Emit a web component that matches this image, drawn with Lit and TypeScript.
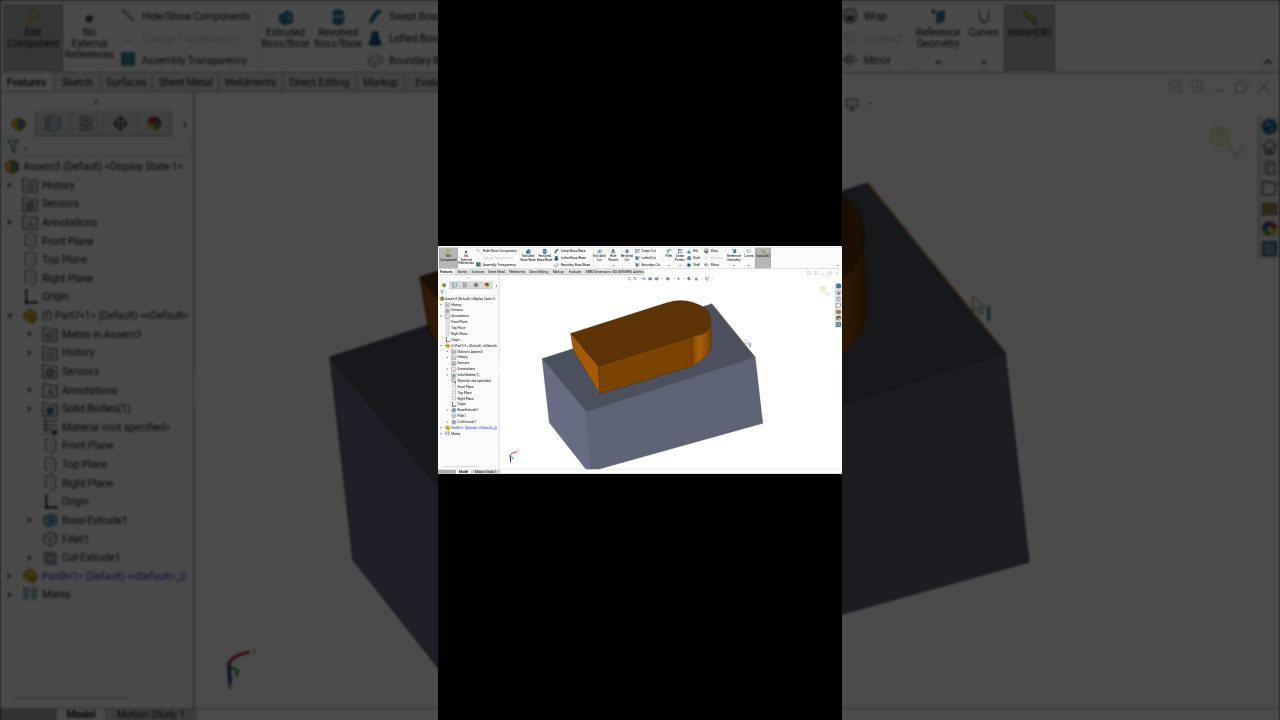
import { LitElement, html, css, svg } from "lit";
import { customElement } from "lit/decorators.js";

const B = "#2f7fa6", D = "#17526f", L = "#9fd0e4", Y = "#e3b520";

const ICONS: Record<string, any> = {
  edit: svg`<circle cx="11" cy="7" r="5" fill="none" stroke="#7c9a2a" stroke-width="2"/><path d="M8 11 L3 18" stroke="#c9a21d" stroke-width="3"/><path d="M13 3 l4 3" stroke="#d8c22a" stroke-width="2"/>`,
  noref: svg`<circle cx="9" cy="12" r="3.4" fill="#333" stroke="#111"/><circle cx="9" cy="12" r="1.2" fill="#ccc"/><path d="M12 6 h4 v5" fill="none" stroke="#ddd"/>`,
  hide: svg`<path d="M4 3 L16 15" stroke="#777" stroke-width="2.4"/><path d="M10 3 l5 5" stroke="#bbb"/><path d="M3 5 l3 -2" stroke="#444"/>`,
  transp: svg`<rect x="8" y="11" width="4" height="4" fill="#ccc"/>`,
  asmt: svg`<rect x="3" y="2" width="14" height="14" fill="#2f7f95" stroke="#1b5468"/><path d="M6 5 h8 M6 8 h8 M6 11 h8" stroke="#9fd0e4" stroke-dasharray="1 1"/><rect x="3" y="16" width="14" height="2" fill="#ddd"/>`,
  extrude: svg`<path d="M3 8 l9 -5 l5 3 v10 l-9 3 l-5 -4z" fill="${B}" stroke="${D}"/><path d="M12 3 v11 l5 2" fill="${L}" stroke="${D}"/><path d="M3 8 l5 3 v8" fill="none" stroke="${D}"/>`,
  revolve: svg`<ellipse cx="10" cy="6" rx="6" ry="4" fill="${B}" stroke="${D}"/><ellipse cx="11" cy="11" rx="6" ry="4" fill="${L}" stroke="${D}"/><ellipse cx="10" cy="15" rx="6" ry="3.6" fill="${B}" stroke="${D}"/>`,
  swept: svg`<path d="M4 16 C8 16 8 11 10 9 C12 6 14 6 16 4" fill="none" stroke="${D}" stroke-width="5"/><path d="M4 16 C8 16 8 11 10 9 C12 6 14 6 16 4" fill="none" stroke="${B}" stroke-width="3"/>`,
  lofted: svg`<path d="M7 3 h6 l1 7 l3 7 q-7 3 -14 0 l3 -7z" fill="${D}" stroke="#0f3c54"/><path d="M9 4 v13" stroke="${B}" stroke-width="2"/>`,
  boundary: svg`<path d="M3 9 l9 -5 l6 3 v6 l-9 5 l-6 -3z" fill="#eee" stroke="#666"/><path d="M3 9 l6 4 l9 -6 M9 13 v5" fill="none" stroke="#666"/>`,
  extcut: svg`<path d="M4 6 l7 -3 l5 3 v9 l-7 3 l-5 -3z" fill="#cfe3ec" stroke="${D}"/><rect x="8" y="7" width="5" height="6" fill="${B}"/>`,
  hole: svg`<circle cx="10" cy="6" r="3.5" fill="${B}" stroke="${D}"/><rect x="4" y="11" width="5" height="5" fill="#b5cbd6" stroke="${D}"/><rect x="11" y="11" width="5" height="5" fill="#b5cbd6" stroke="${D}"/>`,
  revcut: svg`<ellipse cx="10" cy="10" rx="7" ry="7" fill="#cfe3ec" stroke="${D}"/><circle cx="10" cy="10" r="3.5" fill="${D}"/>`,
  sweptcut: svg`<rect x="3" y="4" width="14" height="12" fill="#dfeaf0" stroke="${D}"/><path d="M5 14 C8 14 9 6 15 6" fill="none" stroke="${B}" stroke-width="3"/>`,
  loftcut: svg`<rect x="3" y="4" width="14" height="12" fill="#dfeaf0" stroke="${D}"/><path d="M8 6 h4 l2 8 h-8z" fill="${D}"/>`,
  boundcut: svg`<rect x="3" y="4" width="14" height="12" fill="#eee" stroke="#666"/><path d="M6 6 h8 v8 h-8z" fill="${B}"/>`,
  fillet: svg`<path d="M3 16 V7 Q3 3 8 3 h9 v5 h-6 q-3 0 -3 3 v5z" fill="${L}" stroke="${D}"/><path d="M3 7 l5 4" stroke="${D}"/>`,
  linear: svg`<rect x="3" y="3" width="5" height="5" fill="${B}" stroke="${D}"/><rect x="12" y="3" width="5" height="5" fill="#cfe3ec" stroke="${D}"/><rect x="3" y="12" width="5" height="5" fill="#cfe3ec" stroke="${D}"/><rect x="12" y="12" width="5" height="5" fill="#cfe3ec" stroke="${D}"/>`,
  rib: svg`<path d="M3 15 l9 -3 l5 2 l-8 4z" fill="${B}" stroke="${D}"/><path d="M7 14 V6 l5 6" fill="${L}" stroke="${D}"/>`,
  draft: svg`<path d="M4 16 l3 -11 h8 l2 11z" fill="${B}" stroke="${D}"/><path d="M7 5 l2 11" stroke="${L}"/>`,
  shell: svg`<path d="M3 7 l7 -3 l7 3 v8 l-7 3 l-7 -3z" fill="${L}" stroke="${D}"/><path d="M6 8 l4 -2 l4 2 v5 l-4 2 l-4 -2z" fill="${D}"/>`,
  wrap: svg`<ellipse cx="10" cy="5" rx="7" ry="3" fill="#bbb" stroke="#333"/><path d="M3 5 v10 q7 5 14 0 V5" fill="#ccc" stroke="#333"/><path d="M6 10 h8 v5 h-8z" fill="#345"/>`,
  intersect: svg`<circle cx="10" cy="9" r="6" fill="#eee" stroke="#c4c4c4"/><path d="M5 17 h10" stroke="#c4c4c4"/>`,
  mirror: svg`<path d="M10 1 V19" stroke="#333" stroke-dasharray="2 1"/><path d="M8 5 L2 9 L8 14z" fill="#9db8c6" stroke="#333"/><path d="M12 5 L18 9 L12 14z" fill="#fff" stroke="#333"/>`,
  refgeom: svg`<circle cx="5" cy="4" r="2.4" fill="${D}"/><path d="M9 5 l8 -2 v11 l-8 3z" fill="${B}" stroke="${D}"/><path d="M9 9 v10" stroke="${D}"/>`,
  curves: svg`<path d="M5 2 C4 9 6 16 10 16 C14 16 16 9 15 2" fill="none" stroke="#555" stroke-width="1.4"/><path d="M5 2 C4 9 6 14 10 14" fill="none" stroke="${B}"/>`,
  instant: svg`<path d="M5 3 L17 12 L14 16 L3 7z" fill="#e6d23a" stroke="#333"/><path d="M7 9 L14 15" stroke="#2f7f95" stroke-width="2"/><path d="M14 16 l3 2" stroke="#333" stroke-width="2"/>`,
  history: svg`<path d="M2 3 h5 l2 2 h9 v13 H2z" fill="#e6e8ea" stroke="#333"/><circle cx="10" cy="12" r="3.5" fill="none" stroke="#555"/><path d="M10 10 v2 h2" stroke="#555" fill="none"/>`,
  sensors: svg`<path d="M2 3 h5 l2 2 h9 v13 H2z" fill="#e6e8ea" stroke="#333"/><circle cx="10" cy="12" r="3.6" fill="none" stroke="#222" stroke-width="1.4"/><circle cx="10" cy="12" r="1" fill="#222"/>`,
  annot: svg`<path d="M2 3 h5 l2 2 h9 v13 H2z" fill="#e6e8ea" stroke="#333"/><text x="10" y="16" font-size="10" font-family="Liberation Serif" text-anchor="middle" fill="#222">A</text>`,
  mates: svg`<path d="M2 3 h5 l2 2 h9 v13 H2z" fill="#e6e8ea" stroke="#333"/><circle cx="8" cy="12" r="3" fill="#9fb8c6" stroke="#555"/><circle cx="12" cy="12" r="3" fill="#cfe0e8" stroke="#555"/>`,
  bodies: svg`<path d="M2 3 h5 l2 2 h9 v13 H2z" fill="#e6e8ea" stroke="#333"/><circle cx="10" cy="12" r="3.6" fill="${B}" stroke="${D}"/>`,
  plane: svg`<path d="M10 1 L16 3 V16 L10 19" fill="none" stroke="#444"/><path d="M9 2 H5 V15 H8" fill="none" stroke="#444"/><path d="M11 5 V15" stroke="#444" stroke-dasharray="2 2"/>`,
  origin: svg`<path d="M6 2 V16 H18" fill="none" stroke="#111" stroke-width="1.8"/><circle cx="6" cy="16" r="1.8" fill="#111"/><path d="M4 4 L6 1 L8 4 M16 14 L19 16 L16 18" fill="#111"/>`,
  part: svg`<path d="M3 8 L9 2 L16 6 L18 12 L14 18 L7 15 L3 11z" fill="${Y}" stroke="#7a5c0a"/><path d="M3 8 L11 11 L18 12 M11 11 L14 18" fill="none" stroke="#8a6a10"/>`,
  assem: svg`<path d="M2 7 L9 2 L17 5 L18 13 L11 18 L4 14z" fill="${Y}" stroke="#6c5410"/><path d="M10 4 L16 7 V13 L10 15z" fill="#4a8fb0" stroke="${D}"/>`,
  material: svg`<path d="M2 3 H18 M2 8 H18 M2 13 H12 M5 1 V15" stroke="#333" stroke-width="1.2"/><path d="M2 18 H10" stroke="#7a8a20"/><circle cx="15" cy="16" r="3" fill="#222"/><circle cx="15" cy="16" r="1" fill="#eee"/>`,
  boss: svg`<path d="M3 7 l8 -4 l6 3 v9 l-8 3 l-6 -3z" fill="${L}" stroke="${D}"/><path d="M9 7 l8 -1 M9 7 v11 M3 7 l6 0" stroke="${D}" fill="none"/><rect x="10" y="9" width="4" height="5" fill="${B}"/>`,
  filleti: svg`<path d="M3 6 l8 -4 l6 3 v9 l-7 4 l-7 -4z" fill="#e8eef1" stroke="#445"/><path d="M3 6 l7 4 l7 -5 M10 10 v8" fill="none" stroke="#445"/>`,
  cut: svg`<path d="M4 4 H15 L17 6 V17 H6 L4 15z" fill="#b7c2c8" stroke="#445"/><rect x="8" y="7" width="5" height="7" fill="#e8eef1" stroke="#445"/>`,
  matesf: svg`<path d="M3 2 h5 l0 10 q-3 8 -5 0z" fill="#9fc4d0" stroke="#5a8a9a"/><path d="M12 2 h5 v10 q-2 8 -5 0z" fill="#9fc4d0" stroke="#5a8a9a"/>`,
  fm: svg`<path d="M2 7 L9 2 L17 5 L18 13 L11 18 L4 14z" fill="${Y}" stroke="#6c5410"/><path d="M10 4 L16 7 V13 L10 15z" fill="#4a8fb0" stroke="${D}"/>`,
  pm: svg`<rect x="2" y="2" width="16" height="16" fill="#e6eef2" stroke="#2f5f75"/><path d="M2 6 H18 M2 10 H18 M2 14 H18 M6 2 V18" stroke="#2f5f75"/>`,
  config: svg`<rect x="3" y="2" width="6" height="6" fill="none" stroke="#333"/><rect x="3" y="12" width="6" height="6" fill="none" stroke="#333"/><circle cx="14" cy="7" r="3" fill="none" stroke="#333"/><circle cx="13" cy="15" r="3" fill="none" stroke="#333"/>`,
  dim: svg`<circle cx="10" cy="10" r="6" fill="none" stroke="#111" stroke-width="1.6"/><path d="M10 1 V19 M1 10 H19" stroke="#111" stroke-width="1.4"/>`,
  color: svg`<circle cx="10" cy="10" r="8" fill="#d9b51c"/><path d="M10 10 L2 10 A8 8 0 0 1 16 4.5z" fill="#b32a26"/><path d="M10 10 L16 4.5 A8 8 0 0 1 18 10z" fill="#2a57a8"/><path d="M10 10 L18 10 A8 8 0 0 1 10 18z" fill="#3d8f3a"/>`,
  funnel: svg`<path d="M1 2 H15 L10 9 V18 L6 14 V9z" fill="#e8f0f2" stroke="#1d6a74" stroke-width="1.6"/>`,
  globe: svg`<circle cx="10" cy="10" r="8.4" fill="#1a6a96" stroke="#0b3c58"/><path d="M5 7 q4 -3 7 0 q-3 4 -7 0z M10 13 q3 -2 5 0 l-3 3z" fill="#8fc8e0"/>`,
  home: svg`<path d="M10 2 L18 10 H15 V18 H5 V10 H2z" fill="#e8eef1" stroke="#333" stroke-width="1.2"/><rect x="8" y="12" width="4" height="6" fill="#7aa0b4" stroke="#333"/>`,
  pcube: svg`<path d="M5 4 L13 2 L16 5 V17 L8 18 L5 15z" fill="#ddd" stroke="#444"/><path d="M5 4 L8 7 V18 M8 7 L16 5" fill="none" stroke="#444"/>`,
  open: svg`<path d="M2 3 h6 l2 2 h8 l-3 13 H2z" fill="#f1f1f1" stroke="#333" stroke-width="1.2"/>`,
  pal: svg`<rect x="2" y="4" width="16" height="13" fill="#b79c4a" stroke="#444"/><path d="M5 7 l3 3 l3 -3 l3 3 M5 14 l3 -3 l3 3 l3 -3" stroke="#222" fill="none"/>`,
  wheel: svg`<circle cx="10" cy="10" r="8.5" fill="#3d9a3a"/><path d="M10 10 L1.5 10 A8.5 8.5 0 0 1 10 1.5z" fill="#2a57a8"/><path d="M10 10 L10 1.5 A8.5 8.5 0 0 1 18.5 10z" fill="#c22a26"/><path d="M10 10 L18.5 10 A8.5 8.5 0 0 1 10 18.5z" fill="#e0c020"/><circle cx="10" cy="10" r="2.2" fill="#eee"/>`,
  list: svg`<rect x="2" y="2" width="16" height="16" fill="#3f7f9a" stroke="#1f4a5c"/><path d="M5 6 H15 M5 10 H15 M5 14 H15" stroke="#e5f0f4" stroke-width="1.3"/>`,
  zoomfit: svg`<circle cx="8" cy="8" r="5" fill="#fff" stroke="#333" stroke-width="1.4"/><path d="M12 12 L18 18" stroke="#333" stroke-width="2"/>`,
  zoomarea: svg`<circle cx="8" cy="8" r="5" fill="#cfe3ec" stroke="#333" stroke-width="1.4"/><path d="M12 12 L18 18" stroke="#2f7f95" stroke-width="2"/>`,
  prev: svg`<path d="M3 10 L10 3 L10 7 H17 V13 H10 V17z" fill="#bcd" stroke="#345"/>`,
  section: svg`<path d="M3 6 L12 3 L17 6 V14 L8 17 L3 14z" fill="#4d93b5" stroke="#1b5a7a"/><path d="M8 8 V17" stroke="#fff"/>`,
  style: svg`<path d="M3 6 L11 3 L17 6 V14 L9 17 L3 14z" fill="#5a9fbe" stroke="#1b5a7a"/><circle cx="10" cy="9" r="3" fill="#e3b520"/>`,
  cross: svg`<circle cx="10" cy="10" r="3.4" fill="#2f7f95"/><path d="M10 3 V17 M3 10 H17" stroke="#333"/>`,
  scene: svg`<circle cx="10" cy="10" r="7" fill="#d9b51c"/><path d="M10 10 L3 10 A7 7 0 0 1 14 4z" fill="#b32a26"/><path d="M10 10 L17 10 A7 7 0 0 1 10 17z" fill="#3d8f3a"/>`,
  scene2: svg`<path d="M3 16 L10 3 L17 16z" fill="#7aa0b4" stroke="#345"/><circle cx="14" cy="6" r="3" fill="#e3b520"/>`,
  monitor: svg`<rect x="2" y="3" width="16" height="11" fill="#f2f2f2" stroke="#444" stroke-width="1.3"/><path d="M10 14 V17 M6 18 H14" stroke="#444" stroke-width="1.5"/>`,
  winl: svg`<rect x="4" y="4" width="12" height="12" fill="none" stroke="#999"/><path d="M11 7.5 L8 10 L11 12.5z" fill="#777"/>`,
  winr: svg`<rect x="4" y="4" width="12" height="12" fill="none" stroke="#999"/><path d="M9 7.5 L12 10 L9 12.5z" fill="#777"/>`,
  min: svg`<path d="M4 15 H16" stroke="#888" stroke-width="1.3"/>`,
  restore: svg`<rect x="3" y="7" width="10" height="10" fill="none" stroke="#999"/><path d="M7 7 V3 H17 V13 H13" fill="none" stroke="#999"/>`,
  close: svg`<path d="M4 4 L16 16 M16 4 L4 16" stroke="#999" stroke-width="1.2"/>`,
};

const ic = (n: string) => html`<svg class="ic" viewBox="0 0 20 20">${ICONS[n]}</svg>`;

type Btn = { kind: "btn"; w: number; icon: string; text: string; on?: boolean; drop?: boolean };
type Lst = { kind: "list"; w: number; pad: number; rows: [string, string, boolean?][] };
type Sep = { kind: "sep" };
const btn = (w: number, icon: string, text: string, o: Partial<Btn> = {}): Btn => ({ kind: "btn", w, icon, text, ...o });
const lst = (w: number, pad: number, rows: [string, string, boolean?][]): Lst => ({ kind: "list", w, pad, rows });
const sep: Sep = { kind: "sep" };

const RIBBON: (Btn | Lst | Sep)[] = [
  btn(60, "edit", "Edit\nComponent", { on: true }),
  btn(53, "noref", "No\nExternal\nReferences"),
  lst(142, 2, [["hide", "Hide/Show Components"], ["transp", "Change Transparency", true], ["asmt", "Assembly Transparency"]]),
  sep,
  btn(53, "extrude", "Extruded\nBoss/Base"),
  btn(52, "revolve", "Revolved\nBoss/Base"),
  lst(124, 1, [["swept", "Swept Boss/Base"], ["lofted", "Lofted Boss/Base"], ["boundary", "Boundary Boss/Base"]]),
  sep,
  btn(45, "extcut", "Extruded\nCut"),
  btn(42, "hole", "Hole\nWizard", { drop: true }),
  btn(45, "revcut", "Revolved\nCut"),
  lst(91, 0, [["sweptcut", "Swept Cut"], ["loftcut", "Lofted Cut"], ["boundcut", "Boundary Cut"]]),
  sep,
  btn(37, "fillet", "Fillet", { drop: true }),
  btn(34, "linear", "Linear\nPattern", { drop: true }),
  lst(55, 1, [["rib", "Rib"], ["draft", "Draft"], ["shell", "Shell"]]),
  lst(72, 1, [["wrap", "Wrap"], ["intersect", "Intersect", true], ["mirror", "Mirror"]]),
  sep,
  btn(52, "refgeom", "Reference\nGeometry", { drop: true }),
  btn(40, "curves", "Curves", { drop: true }),
  btn(51, "instant", "Instant3D", { on: true }),
];

const TABS: [string, number][] = [
  ["Features", 54], ["Sketch", 47], ["Surfaces", 52], ["Sheet Metal", 66], ["Weldments", 64], ["Direct Editing", 74],
  ["Markup", 48], ["Evaluate", 60], ["MBD Dimensions", 88], ["SOLIDWORKS Add-Ins", 99],
];

type Row = [number, "" | "r" | "d", string, string, boolean?];
const TREE: Row[] = [
  [0, "r", "history", "History"], [0, "", "sensors", "Sensors"], [0, "r", "annot", "Annotations"],
  [0, "", "plane", "Front Plane"], [0, "", "plane", "Top Plane"], [0, "", "plane", "Right Plane"], [0, "", "origin", "Origin"],
  [0, "d", "part", "(f) Part7<1> (Default) <<Default>"],
  [1, "r", "mates", "Mates in Assem3"], [1, "r", "history", "History"], [1, "", "sensors", "Sensors"], [1, "r", "annot", "Annotations"],
  [1, "r", "bodies", "Solid Bodies(1)"], [1, "", "material", "Material <not specified>"],
  [1, "", "plane", "Front Plane"], [1, "", "plane", "Top Plane"], [1, "", "plane", "Right Plane"], [1, "", "origin", "Origin"],
  [1, "r", "boss", "Boss-Extrude1"], [1, "", "filleti", "Fillet1"], [1, "r", "cut", "Cut-Extrude1"],
  [0, "r", "part", "Part8<1> (Default) <<Default>_D", true], [0, "r", "matesf", "Mates"],
];

const HUD: [string, number][] = [
  ["zoomfit", 607], ["zoomarea", 625], ["prev", 652], ["section", 672], ["style", 693], ["section", 728], ["cross", 762], ["scene", 795], ["scene2", 818], ["monitor", 852],
];

@customElement("sw-ui")
class SwUi extends LitElement {
  static styles = css`
    :host { display: flex; flex-direction: column; width: 1280px; height: 722px; background: #fff; overflow: hidden;
      font-family: Roboto, "Liberation Sans", sans-serif; font-size: 10.3px; letter-spacing: -0.2px; color: #111; }
    .ic { display: block; width: 100%; height: 100%; overflow: visible; }
    .ribbon { display: flex; height: 69px; margin-top: 3px; flex: none; padding: 1px 0 0 3px; box-sizing: border-box; background: #fbfbfb; border-top: 1px solid #bbb; }
    .b { flex: none; display: flex; flex-direction: column; align-items: center; height: 66px; box-sizing: border-box; padding-top: 3px; }
    .b.on { background: #b6b6b6; box-shadow: inset 0 0 0 1px #8c8c8c; }
    .b .i { width: 18px; height: 18px; flex: none; }
    .b .t { white-space: pre-line; text-align: center; line-height: 11px; margin-top: 1px; }
    .b .d { margin-top: auto; margin-bottom: 7px; width: 0; height: 0; border: 3px solid transparent; border-top-color: #333; border-bottom: 0; }
    .l { flex: none; display: flex; flex-direction: column; box-sizing: border-box; }
    .l .r { display: flex; align-items: center; height: 22px; gap: 4px; white-space: nowrap; }
    .l .i { width: 20px; height: 18px; flex: none; }
    .off { color: #c4c4c4; }
    .sep { flex: none; width: 1px; height: 64px; background: #dcdcdc; }
    .chev { margin: auto 8px 6px auto; width: 8px; height: 8px; }
    .tabs { display: flex; height: 20px; flex: none; box-sizing: border-box; border-top: 1px solid #a0a0a0; position: relative; z-index: 1; }
    .tab { flex: none; display: flex; align-items: center; justify-content: center; box-sizing: border-box; background: #e2e2e2; border-right: 1px solid #a8a8a8; border-bottom: 1px solid #9d9d9d; white-space: nowrap; font-size: 10.6px; }
    .tab.on { background: #fbfbfb; font-weight: 500; }
    .tabrest { flex: 1; display: flex; justify-content: flex-end; background: #fff; }
    .win { display: flex; gap: 5px; margin: 5px 8px 0 0; height: 17px; }
    .win div { width: 17px; height: 17px; }
    .main { flex: 1; display: flex; min-height: 0; }
    .side { flex: none; width: 195px; box-sizing: border-box; border-right: 2px solid #b0b0b0; display: flex; flex-direction: column; position: relative; background: #fbfbfb; }
    .grip { height: 19px; flex: none; display: flex; align-items: center; justify-content: center; border-bottom: 1px solid #e4e4e4; }
    .dot { width: 5px; height: 5px; border-radius: 50%; background: #b4b4b4; }
    .stabs { display: flex; height: 24px; flex: none; padding-left: 2px; align-items: stretch; }
    .st { flex: none; width: 33px; display: flex; align-items: center; justify-content: center; background: #d9d9d9; border-right: 1px solid #b0b0b0; border-bottom: 1px solid #aaa; }
    .st.on { background: #fbfbfb; border-bottom: 0; }
    .st .i { width: 17px; height: 17px; }
    .more { flex: none; width: 26px; display: flex; align-items: center; justify-content: center; font-size: 15px; font-weight: 500; line-height: 1; }
    .filter { height: 20px; flex: none; margin: 0 2px 0 3px; box-sizing: border-box; border: 1px solid #dcdcdc; display: flex; align-items: center; padding-left: 3px; gap: 2px; }
    .filter .i { width: 15px; height: 15px; }
    .da { width: 0; height: 0; border: 2px solid transparent; border-top-color: #333; border-bottom: 0; margin-top: 6px; }
    .tree { flex: 1; overflow: hidden; padding-top: 1.3px; font-size: 10.6px; }
    .row { display: flex; align-items: center; height: 18.64px; white-space: nowrap; }
    .row .ar { flex: none; width: 20px; display: flex; justify-content: center; }
    .tri-r { width: 0; height: 0; border: 3px solid transparent; border-left: 4px solid #555; border-right: 0; }
    .tri-d { width: 0; height: 0; border: 3.5px solid transparent; border-top: 4px solid #444; border-bottom: 0; }
    .row .i { flex: none; width: 18px; height: 18px; margin-right: 3px; margin-left: 1px; }
    .root { padding-left: 3px; }
    .root .i { margin-left: 0; margin-right: 2px; }
    .l1 { padding-left: 20px; }
    .blue { color: #2f2fe0; }
    .hbar { flex: none; height: 1px; margin: 0 64px 10px 16px; background: #8c8c8c; }
    .handle { position: absolute; right: -8px; top: 281px; width: 6px; height: 32px; border: 1px solid #b4b4b4; border-left: 0; border-radius: 0 3px 3px 0; background: #fff; display: flex; align-items: center; font-size: 8px; color: #aaa; }
    .gfx { flex: 1; position: relative; overflow: hidden; background: #fff; }
    .model { display: block; width: 1085px; height: 616px; }
    .hud { position: absolute; left: 400px; top: 5px; height: 16px; }
    .hud .h { position: absolute; top: 0; width: 14px; height: 14px; }
    .dash { position: absolute; top: 6px; width: 4px; height: 1px; background: #666; }
    .pane { position: absolute; right: 0; top: 25px; width: 22px; display: flex; flex-direction: column; background: #e4e4e4; border-left: 1px solid #aaa; box-sizing: border-box; }
    .pane .p { height: 20.4px; box-sizing: border-box; padding: 1px; border-bottom: 1px solid #fff; }
    .orient { position: absolute; left: 1013px; top: 33px; width: 42px; height: 38px; }
    .status { display: flex; height: 14px; flex: none; box-sizing: border-box; border-top: 1px solid #a8a8a8; }
    .snav { width: 57px; background: #ababab; flex: none; }
    .stb { flex: none; display: flex; align-items: center; justify-content: center; font-size: 10.6px; line-height: 1; }
    .stb.a { width: 48px; font-weight: 700; background: #fbfbfb; }
    .stb.m { width: 92px; background: #cfcfcf; }
  `;

  renderRibbon() {
    return RIBBON.map((it) => {
      if (it.kind === "sep") return html`<div class="sep"></div>`;
      if (it.kind === "btn")
        return html`<div class="b ${it.on ? "on" : ""}" style="width:${it.w}px">
          <div class="i">${ic(it.icon)}</div>
          <div class="t">${it.text}</div>
          ${it.drop ? html`<div class="d"></div>` : ""}
        </div>`;
      return html`<div class="l" style="width:${it.w}px;padding-left:${it.pad}px">
        ${it.rows.map(([i, t, off]) => html`<div class="r ${off ? "off" : ""}"><div class="i">${ic(i)}</div><span>${t}</span></div>`)}
      </div>`;
    });
  }

  render() {
    return html`
      <div class="ribbon">${this.renderRibbon()}
        <svg class="chev" viewBox="0 0 8 8"><path d="M0 6 L4 2 L8 6" fill="none" stroke="#222" stroke-width="1.4"/></svg>
      </div>
      <div class="tabs">
        ${TABS.map(([t, w], i) => html`<div class="tab ${i === 0 ? "on" : ""}" style="width:${w}px">${t}</div>`)}
        <div class="tabrest"><div class="win">${["winl", "winr", "min", "restore", "close"].map((n) => html`<div>${ic(n)}</div>`)}</div></div>
      </div>
      <div class="main">
        <div class="side">
          <div class="grip"><div class="dot"></div></div>
          <div class="stabs">
            ${["fm", "pm", "config", "dim", "color"].map((n, i) => html`<div class="st ${i === 0 ? "on" : ""}"><div class="i">${ic(n)}</div></div>`)}
            <div class="more">›</div>
          </div>
          <div class="filter"><div class="i">${ic("funnel")}</div><div class="da"></div></div>
          <div class="tree">
            <div class="row root"><div class="i">${ic("assem")}</div><span>Assem3 (Default) &lt;Display State-1&gt;</span></div>
            ${TREE.map(([lv, a, i, t, blue]) => html`<div class="row ${lv ? "l1" : ""} ${blue ? "blue" : ""}">
              <div class="ar">${a === "r" ? html`<div class="tri-r"></div>` : a === "d" ? html`<div class="tri-d"></div>` : ""}</div>
              <div class="i">${ic(i)}</div><span>${t}</span></div>`)}
          </div>
          <div class="hbar"></div>
          <div class="handle">‹</div>
        </div>
        <div class="gfx">
          <svg class="model" viewBox="195 92 1085 616">
            <defs>
              <linearGradient id="rnd" x1="0" x2="1" y1="0" y2="0">
                <stop offset="0" stop-color="#7c4400"/><stop offset=".35" stop-color="#a85e08"/><stop offset=".7" stop-color="#94500a"/><stop offset="1" stop-color="#6c3a02"/>
              </linearGradient>
            </defs>
            <polygon points="330,357 471,525 486,720 469,707 353,560" fill="#686c83" stroke="#3a3c48" stroke-width="1"/>
            <polygon points="471,525 1005,352 1029,562 484,714 486,720" fill="#5e6375" stroke="#3a3c48" stroke-width="1"/>
            <polygon points="330,357 868,183 1005,352 471,525" fill="#4b505e" stroke="#33363f" stroke-width="1"/>
            <path d="M868 183 L1005 352" stroke="#d08a3a" stroke-width="1.6"/>
            <polygon points="420,277 508,380 513,469 429,330" fill="#a55b06" stroke="#3a2000" stroke-width="1"/>
            <polygon points="508,380 804,287 807,380 513,469" fill="#7a4300" stroke="#3a2000" stroke-width="1"/>
            <path d="M804 287 Q835 282 851 272 Q866 252 864 232 L867 319 Q855 345 840 356 Q825 370 807 380 Z" fill="url(#rnd)" stroke="#4a2a00" stroke-width=".6"/>
            <path d="M420 277 L725 180 Q790 160 846 197 Q880 228 851 272 Q835 282 804 287 L508 380 Z" fill="#5e3305" stroke="#3a2000" stroke-width="1"/>
            <path d="M228 665 Q232 655 250 652" fill="none" stroke="#b8242a" stroke-width="3"/>
            <path d="M229 664 L230 684" stroke="#1a2a9a" stroke-width="3.6"/>
            <path d="M229 666 L238 671 L236 676" fill="none" stroke="#2f8a3a" stroke-width="2.4"/>
            <path d="M228 688 H232 M230 684 V688" stroke="#444"/>
            <text x="251" y="654" font-size="9" font-family="Liberation Sans" fill="#999">X</text>
            <path d="M973 296 L973 312 L977 308 L980 314 L983 313 L980 307 L985 307 Z" fill="#fff" stroke="#666" stroke-width="1"/>
            <rect x="987" y="306" width="3.4" height="15" rx="1" fill="#3e8ea6"/>
          </svg>
          <div class="hud">
            ${HUD.map(([n, x]) => html`<div class="h" style="left:${x - 595 - 7}px">${ic(n)}</div>`)}
            ${[640, 684, 708, 745, 780, 835, 868].map((x) => html`<div class="dash" style="left:${x - 595}px"></div>`)}
          </div>
          <div class="pane">
            ${["globe", "home", "pcube", "open", "pal", "wheel", "list"].map((n) => html`<div class="p">${ic(n)}</div>`)}
          </div>
          <svg class="orient" viewBox="0 0 44 40">
            <circle cx="12" cy="12" r="10" fill="#f3efce" stroke="#eee4ac" stroke-width="2"/>
            <path d="M7 8 L14 5 L19 9 L12 13z" fill="#dde2e5"/>
            <path d="M20 20 L30 34 L38 22" fill="none" stroke="#e2e6e8" stroke-width="5"/>
          </svg>
        </div>
      </div>
      <div class="status">
        <div class="snav"></div>
        <div class="stb a">Model</div>
        <div class="stb m">Motion Study 1</div>
      </div>
    `;
  }
}

@customElement("app-root")
export class AppRoot extends LitElement {
  static styles = css`
    :host { display: block; position: relative; width: 1280px; height: 720px; overflow: hidden; background: #000; }
    .bg { display: flex; filter: blur(1.1px) brightness(0.295); }
    .stage { position: absolute; left: 438px; top: 0; width: 404px; height: 720px; background: #000; display: flex; align-items: center; }
    .video { width: 404px; height: 228px; overflow: hidden; flex: none; }
    .fg { display: flex; transform-origin: 0 0; transform: scale(0.3156); filter: blur(0.8px); }
  `;
  render() {
    return html`
      <sw-ui class="bg"></sw-ui>
      <div class="stage"><div class="video"><sw-ui class="fg"></sw-ui></div></div>
    `;
  }
}
